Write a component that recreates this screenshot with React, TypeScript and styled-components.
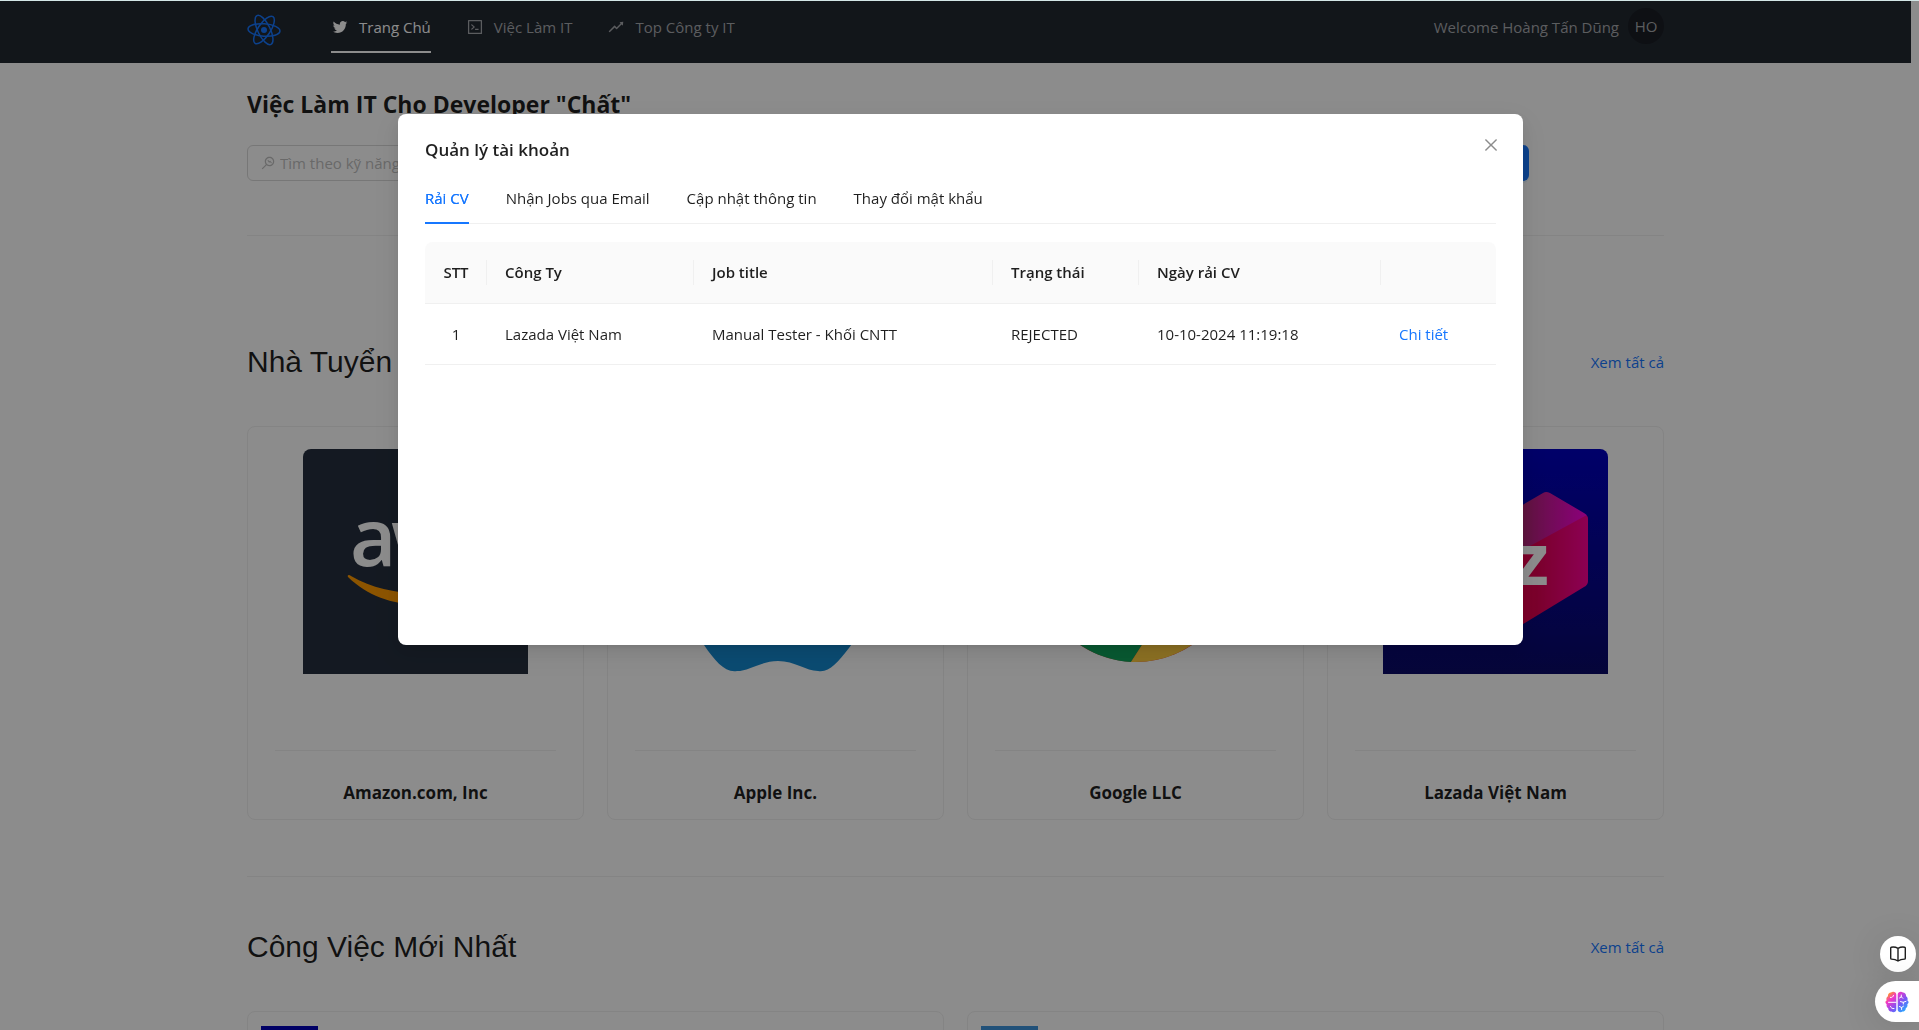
import React from "react";
import styled, { createGlobalStyle } from "styled-components";
import {
  AiOutlineTwitter,
  AiOutlineCode,
  AiOutlineRise,
  AiOutlineMonitor,
  AiOutlineClose,
} from "react-icons/ai";

const sans = `"Open Sans", "Noto Sans", sans-serif`;
const ink = "rgba(0, 0, 0, 0.88)";
const blue = "#1677ff";
const hairline = "#f0f0f0";

const GlobalStyle = createGlobalStyle`
  *, *::before, *::after { box-sizing: border-box; }
  html, body { margin: 0; }
  body {
    background: #fff;
    color: ${ink};
    font-family: ${sans};
    font-size: 15px;
    line-height: 25px;
    overflow: hidden;
  }
  button, input { font: inherit; color: inherit; }
  a { color: ${blue}; text-decoration: none; }
  h1, h2, h3, ul { margin: 0; padding: 0; font-weight: inherit; }
  ul { list-style: none; }
`;

/* ---------- page ---------- */

const Page = styled.div`
  height: 100vh;
  overflow: hidden;
  padding-right: 8px;
`;

const Container = styled.div`
  width: 100%;
  max-width: 1417px;
  margin: 0 auto;
`;

const TopEdge = styled.div`
  position: fixed;
  inset: 0 0 auto;
  height: 1px;
  background: #d3e6e6;
  z-index: 30;
`;

const Header = styled.header`
  height: 63px;
  background: #222831;
`;

const HeaderBar = styled(Container)`
  display: flex;
  align-items: flex-start;
`;

const Brand = styled.a`
  display: flex;
  padding-top: 13px;
  margin-right: 50px;
`;

const Menu = styled.ul`
  flex: 1;
  display: flex;
  gap: 35px;
`;

const MenuLink = styled.a<{ $active?: boolean }>`
  display: flex;
  align-items: center;
  gap: 10px;
  height: 53px;
  border-bottom: 2px solid ${(p) => (p.$active ? "#fff" : "transparent")};
  color: ${(p) => (p.$active ? "#fff" : "#a7a9ad")};
  padding-top: 3px;
`;

const User = styled.button`
  display: flex;
  align-items: flex-start;
  gap: 9px;
  padding: 8px 0 0;
  border: 0;
  background: none;
  color: #a7a9ad;
  line-height: 38px;
`;

const Avatar = styled.span`
  width: 36px;
  height: 36px;
  border-radius: 50%;
  background: #1a1e25;
  line-height: 36px;
  text-align: center;
`;

const PageTitle = styled.h1`
  padding-top: 23px;
  font-size: 23px;
  line-height: 36px;
  font-weight: 700;
`;

const SearchForm = styled.form`
  display: grid;
  grid-template-columns: 1fr auto;
  gap: 24px;
  max-width: 1282px;
  margin-top: 23px;
`;

const SearchBox = styled.label`
  display: flex;
  align-items: center;
  gap: 4px;
  height: 36px;
  padding: 0 12px;
  border: 1px solid #d9d9d9;
  border-radius: 6px;
  color: #bfbfbf;

  input {
    flex: 1;
    min-width: 0;
    border: 0;
    outline: 0;
    padding: 0;
    background: none;
  }
  input::placeholder { color: #bfbfbf; opacity: 1; }
`;

const SearchButton = styled.button`
  height: 36px;
  padding: 0 18px;
  border: 0;
  border-radius: 6px;
  background: ${blue};
  color: #fff;
  box-shadow: 0 2px 0 rgba(5, 145, 255, 0.1);
`;

const Rule = styled.hr`
  height: 1px;
  margin: 0;
  border: 0;
  background: ${hairline};
`;

const SectionRule = styled(Rule)`
  margin: 54px 0 52px;
`;

const Section = styled.section<{ $spaced?: boolean }>`
  padding: ${(p) => (p.$spaced ? "56px 0 2px" : "0")};
`;

const SectionHead = styled.div`
  display: flex;
  align-items: center;
  justify-content: space-between;
  margin-bottom: 46px;
`;

const SectionTitle = styled.h2`
  font: 400 30px/36px "Liberation Sans", Arial, sans-serif;
`;

const CardGrid = styled.div<{ $columns: number }>`
  display: grid;
  grid-template-columns: repeat(${(p) => p.$columns}, 1fr);
  gap: 23px;
`;

const CompanyCard = styled.article`
  border: 1px solid ${hairline};
  border-radius: 8px;
  padding: 22px 27px 12px;
`;

const Cover = styled.div`
  width: 225px;
  height: 225px;
  margin: 0 auto 76px;
  border-radius: 8px 8px 0 0;
  overflow: hidden;

  svg { display: block; }
`;

const CompanyName = styled.h3`
  margin-top: 28px;
  font-size: 17px;
  line-height: 28px;
  font-weight: 700;
  text-align: center;
`;

const JobCard = styled.article`
  border: 1px solid ${hairline};
  border-radius: 8px;
  padding: 14px 13px;
  height: 120px;
`;

const JobThumb = styled.div<{ $color: string }>`
  width: 57px;
  height: 57px;
  background: ${(p) => p.$color};
`;

/* ---------- modal ---------- */

const Mask = styled.div`
  position: fixed;
  inset: 0;
  z-index: 10;
  display: flex;
  justify-content: center;
  align-items: flex-start;
  padding: 114px 16px 0 18px;
  background: rgba(0, 0, 0, 0.45);
`;

const Dialog = styled.div`
  position: relative;
  width: 100%;
  max-width: 1125px;
  min-height: 531px;
  padding: 23px 27px;
  border-radius: 8px;
  background: #fff;
  box-shadow: 0 6px 16px rgba(0, 0, 0, 0.08), 0 3px 6px -4px rgba(0, 0, 0, 0.12),
    0 9px 28px 8px rgba(0, 0, 0, 0.05);
`;

const DialogTitle = styled.h2`
  font-size: 17px;
  line-height: 26px;
  font-weight: 600;
`;

const CloseButton = styled.button`
  position: absolute;
  top: 19px;
  right: 20px;
  display: grid;
  place-items: center;
  width: 24px;
  height: 24px;
  padding: 0;
  border: 0;
  background: none;
  color: rgba(0, 0, 0, 0.45);
`;

const Tabs = styled.div`
  display: flex;
  gap: 37px;
  margin-bottom: 18px;
  padding-top: 9px;
  box-shadow: inset 0 -1px ${hairline};
`;

const Tab = styled.button<{ $active?: boolean }>`
  height: 52px;
  padding: 2px 0 0;
  border: 0;
  border-bottom: 2px solid ${(p) => (p.$active ? blue : "transparent")};
  background: none;
  color: ${(p) => (p.$active ? blue : ink)};
  text-shadow: ${(p) => (p.$active ? "0 0 0.25px currentcolor" : "none")};
`;

const Table = styled.table`
  width: 100%;
  table-layout: fixed;
  border-collapse: separate;
  border-spacing: 0;
`;

const Cell = styled.td<{ $center?: boolean }>`
  padding: 18px 18px 17px;
  border-bottom: 1px solid ${hairline};
  text-align: ${(p) => (p.$center ? "center" : "left")};
`;

const HeadCell = styled.th<{ $center?: boolean; $last?: boolean }>`
  padding: 18px 17px 18px 18px;
  border-bottom: 1px solid ${hairline};
  background: linear-gradient(${hairline}, ${hairline}) right center /
    ${(p) => (p.$last ? "0 0" : "1px 25px")} no-repeat #fafafa;
  font-weight: 600;
  white-space: nowrap;
  text-align: ${(p) => (p.$center ? "center" : "left")};

  &:first-child { border-top-left-radius: 8px; padding: 18px 8px; }
  &:last-child { border-top-right-radius: 8px; }
`;

/* ---------- floating tools ---------- */

const FloatingTools = styled.div`
  position: fixed;
  right: 0;
  bottom: 8px;
  z-index: 20;
  display: flex;
  flex-direction: column;
  align-items: flex-end;
  gap: 9px;
`;

const ToolButton = styled.button<{ $docked?: boolean }>`
  display: grid;
  place-items: center;
  width: ${(p) => (p.$docked ? 44 : 36)}px;
  height: ${(p) => (p.$docked ? 41 : 36)}px;
  margin-right: ${(p) => (p.$docked ? 0 : 3)}px;
  padding: 0;
  border: 0;
  border-radius: ${(p) => (p.$docked ? "21px 0 0 21px" : "50%")};
  background: #fff;
  box-shadow: 0 4px 36px rgba(0, 0, 0, 0.12);
`;

/* ---------- drawings ---------- */

const AtomLogo = () => (
  <svg width="34" height="34" viewBox="-17 -17 34 34" fill="none" stroke={blue} strokeWidth="1.5">
    {[4, 64, 124].map((angle) => (
      <ellipse key={angle} rx="16" ry="6.2" transform={`rotate(${angle})`} />
    ))}
    <circle r="3" fill={blue} stroke="none" />
  </svg>
);

const AwsCover = () => (
  <svg width="225" height="225" viewBox="0 0 225 225">
    <rect width="225" height="225" fill="#252f3e" />
    <text x="47 88 148" y="117" fontFamily={sans} fontSize="80" fontWeight="600" fill="#fff">
      aws
    </text>
    <path d="M45 128C44 126 46 125 48 127C88 150 138 148 172 132C176 130 178 134 175 136C140 162 82 164 45 128Z" fill="#ff9900" />
  </svg>
);

const AppleCover = () => (
  <svg width="225" height="225" viewBox="0 0 225 225">
    <path
      d="M116 68C126 68 144 54 166 56C180 57 196 64 204 76C176 96 180 138 208 152C206 168 198 184 186 199C174 214 166 224 155 222C143 222 132 212 115 212C98 212 86 222 74 222C62 224 52 212 41 196C22 168 14 128 28 96C40 64 72 54 96 62C104 65 110 68 116 68Z"
      fill="#1489d0"
    />
    <path d="M114 50C112 26 132 4 156 2C158 28 136 50 114 50Z" fill="#1489d0" />
  </svg>
);

const ChromeCover = () => (
  <svg width="225" height="225" viewBox="-113 -112 225 225">
    <circle r="101" fill="#ea4335" />
    <path d="M-87 -50A101 101 0 0 0 -5 101L44 25L-40 25Z" fill="#0fa35b" />
    <path d="M-5 101A101 101 0 0 0 87 -50L0 -50L44 25Z" fill="#ffcd40" />
    <circle r="46" fill="#fff" />
    <circle r="37" fill="#4285f4" />
  </svg>
);

const LazadaCover = () => (
  <svg width="225" height="225" viewBox="0 0 225 225">
    <defs>
      <linearGradient id="lz-bg" x2="0" y2="1">
        <stop offset="0" stopColor="#0000c0" />
        <stop offset="1" stopColor="#0a0a68" />
      </linearGradient>
      <linearGradient id="lz-left">
        <stop offset="0" stopColor="#ff7a00" />
        <stop offset="1" stopColor="#f0003c" />
      </linearGradient>
      <linearGradient id="lz-right">
        <stop offset="0" stopColor="#f0003c" />
        <stop offset="0.45" stopColor="#e00050" />
        <stop offset="1" stopColor="#ff0098" />
      </linearGradient>
      <linearGradient id="lz-lid">
        <stop offset="0.2" stopColor="#a02a60" />
        <stop offset="1" stopColor="#ff00e0" />
      </linearGradient>
    </defs>
    <rect width="225" height="225" fill="url(#lz-bg)" />
    <path d="M21 69Q20 66 24 64L58 44Q62 42 66 44L112 72L112 192L24 140Q20 138 20 133Z" fill="url(#lz-left)" />
    <path d="M112 72L160 44Q163 42 167 44L201 64Q205 66 204 69L112 116Z" fill="url(#lz-lid)" />
    <path d="M112 116L202 67Q205 66 205 70L205 132Q205 136 201 138L112 192Z" fill="url(#lz-right)" />
    <text x="166" y="136" textAnchor="end" fontFamily={sans} fontSize="72" fontWeight="700" fill="#fff">
      laz
    </text>
  </svg>
);

const BookIcon = () => (
  <svg width="18" height="18" viewBox="0 0 18 18" fill="none" stroke="#1f1f1f" strokeWidth="1.4" strokeLinejoin="round" strokeLinecap="round">
    <path d="M9 3.400C7 2.200 4.500 1.900 2.400 2.200C1.900 2.300 1.700 2.600 1.700 3V13.200C1.700 13.800 2 14.100 2.500 14.100C5 14.200 7.200 14.800 9 16C10.800 14.800 13 14.200 15.500 14.100C16 14.100 16.300 13.800 16.300 13.200V3C16.300 2.600 16.100 2.300 15.600 2.200C13.500 1.900 11 2.200 9 3.400V16" />
  </svg>
);

const BrainIcon = () => (
  <svg width="24" height="22" viewBox="0 0 24 22">
    <defs>
      <linearGradient id="brain-fill" x1="0" y1="0" x2="1" y2="1">
        <stop offset="0.08" stopColor="#ffa516" />
        <stop offset="0.3" stopColor="#f236c8" />
        <stop offset="0.6" stopColor="#7a55f5" />
        <stop offset="0.92" stopColor="#20b4ff" />
      </linearGradient>
    </defs>
    <path
      d="M11.300 3.500C11.300 1 8 0 6 1.500C4 1.600 2.600 3.500 3 5.300C1.300 6.200 1 8.200 1.700 9.400C0 10.200 0 12.400 1.700 13.200C1.100 15 2 16.600 3.200 17.200C3.200 19.300 4.800 20.600 6.500 20.600C8.500 22.200 11.300 21 11.300 18.500ZM12.700 3.500C12.700 1 16 0 18 1.500C20 1.600 21.400 3.500 21 5.300C22.700 6.200 23 8.200 22.300 9.400C24 10.200 24 12.400 22.300 13.200C22.900 15 22 16.600 20.800 17.200C20.800 19.300 19.200 20.600 17.500 20.600C15.500 22.200 12.700 21 12.700 18.500Z"
      fill="url(#brain-fill)"
    />
    <path
      d="M3.500 11.300H11M5.500 6.500C7 6.700 8.200 5.800 8.500 4.500M5.500 15.500C6 17 7.200 17.800 9 17.600M14.500 7L16.300 5.800L17.800 7.300M16.300 5.800V4M15.500 10.600L18.300 11.300L21 10.300M18.300 11.300V13M14.500 15.500L16.600 16.500L18.500 15.200M16.600 16.500V18.500"
      fill="none"
      stroke="#fff"
      strokeWidth="1"
      strokeLinecap="round"
    />
  </svg>
);

/* ---------- data ---------- */

const menu = [
  { label: "Trang Chủ", Icon: AiOutlineTwitter, active: true },
  { label: "Việc Làm IT", Icon: AiOutlineCode },
  { label: "Top Công ty IT", Icon: AiOutlineRise },
];

const companies = [
  { name: "Amazon.com, Inc", Art: AwsCover },
  { name: "Apple Inc.", Art: AppleCover },
  { name: "Google LLC", Art: ChromeCover },
  { name: "Lazada Việt Nam", Art: LazadaCover },
];

const tabs = ["Rải CV", "Nhận Jobs qua Email", "Cập nhật thông tin", "Thay đổi mật khẩu"];

const columns = [
  { title: "STT", width: 62 },
  { title: "Công Ty", width: 207 },
  { title: "Job title", width: 299 },
  { title: "Trạng thái", width: 146 },
  { title: "Ngày rải CV", width: 242 },
  { title: "", width: 115 },
];

const resumes = [
  {
    company: "Lazada Việt Nam",
    job: "Manual Tester - Khối CNTT",
    status: "REJECTED",
    date: "10-10-2024 11:19:18",
  },
];

const tableWidth = columns.reduce((sum, c) => sum + c.width, 0);

export default function App() {
  return (
    <>
      <GlobalStyle />
      <TopEdge />
      <Page>
        <Header>
          <HeaderBar>
            <Brand href="#" aria-label="Home">
              <AtomLogo />
            </Brand>
            <Menu>
              {menu.map(({ label, Icon, active }) => (
                <li key={label}>
                  <MenuLink href="#" $active={active}>
                    <Icon size={18} />
                    {label}
                  </MenuLink>
                </li>
              ))}
            </Menu>
            <User type="button">
              <span>Welcome Hoàng Tấn Dũng</span>
              <Avatar>HO</Avatar>
            </User>
          </HeaderBar>
        </Header>

        <Container as="main">
          <PageTitle>Việc Làm IT Cho Developer "Chất"</PageTitle>
          <SearchForm>
            <SearchBox>
              <AiOutlineMonitor size={16} />
              <input placeholder="Tìm theo kỹ năng..." />
            </SearchBox>
            <SearchButton type="button">Search</SearchButton>
          </SearchForm>
          <SectionRule />

          <Section $spaced>
            <SectionHead>
              <SectionTitle>Nhà Tuyển Dụng Hàng Đầu</SectionTitle>
              <a href="#">Xem tất cả</a>
            </SectionHead>
            <CardGrid $columns={4}>
              {companies.map(({ name, Art }) => (
                <CompanyCard key={name}>
                  <Cover>
                    <Art />
                  </Cover>
                  <Rule />
                  <CompanyName>{name}</CompanyName>
                </CompanyCard>
              ))}
            </CardGrid>
          </Section>
          <SectionRule />

          <Section>
            <SectionHead>
              <SectionTitle>Công Việc Mới Nhất</SectionTitle>
              <a href="#">Xem tất cả</a>
            </SectionHead>
            <CardGrid $columns={2}>
              <JobCard>
                <JobThumb $color="#0000b8" />
              </JobCard>
              <JobCard>
                <JobThumb $color="#3d94dc" />
              </JobCard>
            </CardGrid>
          </Section>
        </Container>
      </Page>

      <Mask>
        <Dialog role="dialog" aria-modal="true" aria-labelledby="account-title">
          <DialogTitle id="account-title">Quản lý tài khoản</DialogTitle>
          <CloseButton type="button" aria-label="Close">
            <AiOutlineClose size={18} />
          </CloseButton>
          <Tabs role="tablist">
            {tabs.map((label, i) => (
              <Tab key={label} type="button" role="tab" aria-selected={i === 0} $active={i === 0}>
                {label}
              </Tab>
            ))}
          </Tabs>
          <Table>
            <colgroup>
              {columns.map((c, i) => (
                <col key={i} style={{ width: `${(c.width / tableWidth) * 100}%` }} />
              ))}
            </colgroup>
            <thead>
              <tr>
                {columns.map((c, i) => (
                  <HeadCell key={i} $center={i === 0} $last={i === columns.length - 1}>
                    {c.title}
                  </HeadCell>
                ))}
              </tr>
            </thead>
            <tbody>
              {resumes.map((r, i) => (
                <tr key={r.date}>
                  <Cell $center>{i + 1}</Cell>
                  <Cell>{r.company}</Cell>
                  <Cell>{r.job}</Cell>
                  <Cell>{r.status}</Cell>
                  <Cell>{r.date}</Cell>
                  <Cell>
                    <a href="#">Chi tiết</a>
                  </Cell>
                </tr>
              ))}
            </tbody>
          </Table>
        </Dialog>
      </Mask>

      <FloatingTools>
        <ToolButton type="button" aria-label="Reader">
          <BookIcon />
        </ToolButton>
        <ToolButton type="button" aria-label="Assistant" $docked>
          <BrainIcon />
        </ToolButton>
      </FloatingTools>
    </>
  );
}
